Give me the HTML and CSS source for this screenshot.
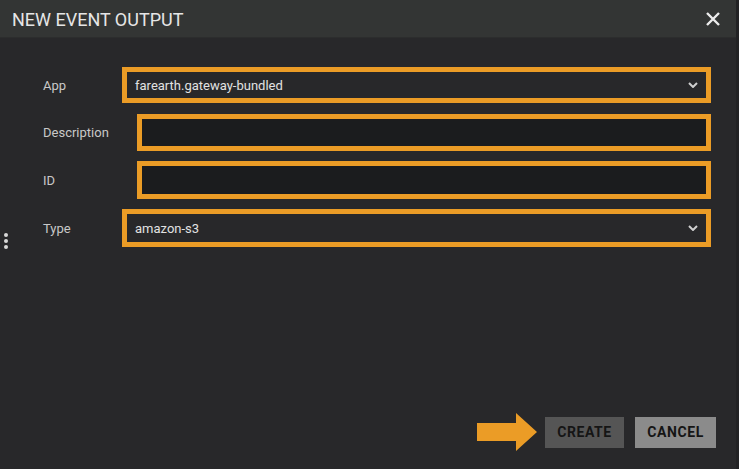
FILE: index.html
```html
<!DOCTYPE html>
<html>
<head>
<meta charset="utf-8">
<link rel="stylesheet" href="styles.css">
</head>
<body>
<div class="dialog">
  <div class="header">
    <span class="title">NEW EVENT OUTPUT</span>
    <svg class="close" width="16" height="16" viewBox="0 0 16 16"><path d="M2 2 L14 14 M14 2 L2 14" stroke="#ececec" stroke-width="2.4" fill="none"/></svg>
  </div>
  <div class="body">
    <div class="dots"><span></span><span></span><span></span></div>
    <div class="form">
      <div class="row row-sm">
        <div class="label lbl-select">App</div>
        <div class="field select"><span class="value">farearth.gateway-bundled</span>
          <svg class="chev" width="10" height="6" viewBox="0 0 10 6"><path d="M1 1 L5 5 L9 1" stroke="#cfcfcf" stroke-width="2" fill="none"/></svg>
        </div>
      </div>
      <div class="row">
        <div class="label lbl-input">Description</div>
        <div class="field input"></div>
      </div>
      <div class="row row-lg">
        <div class="label lbl-input">ID</div>
        <div class="field input"></div>
      </div>
      <div class="row row-lg">
        <div class="label lbl-select">Type</div>
        <div class="field select"><span class="value">amazon-s3</span>
          <svg class="chev" width="10" height="6" viewBox="0 0 10 6"><path d="M1 1 L5 5 L9 1" stroke="#cfcfcf" stroke-width="2" fill="none"/></svg>
        </div>
      </div>
    </div>
    <div class="footer">
      <svg class="arrow" width="60" height="38" viewBox="0 0 60 38"><path d="M0 10 H39 V0 L60 19 L39 38 V28 H0 Z" fill="#eb9c26"/></svg>
      <button class="btn create">CREATE</button>
      <button class="btn cancel">CANCEL</button>
    </div>
  </div>
</div>
</body>
</html>
```
FILE: styles.css
```css
html, body {
  margin: 0;
  padding: 0;
  background: #222224;
}
body {
  width: 739px;
  height: 469px;
  overflow: hidden;
  font-family: Roboto, "Liberation Sans", sans-serif;
}
.dialog {
  width: 736px;
  height: 469px;
  background: #28282a;
  display: flex;
  flex-direction: column;
}
.header {
  height: 38px;
  flex: none;
  background: #333534;
  border-bottom: 1px solid #2c2d2d;
  box-sizing: border-box;
  display: flex;
  align-items: center;
  justify-content: space-between;
  padding: 0 15px 0 12px;
}
.title {
  color: #e6e6e6;
  font-size: 18px;
  white-space: nowrap;
  margin-top: 1px;
}
.close {
  margin-top: 1px;
}
.body {
  position: relative;
  flex: 1;
  display: flex;
  flex-direction: column;
  justify-content: space-between;
}
.dots {
  position: absolute;
  left: 4px;
  top: 195px;
  display: flex;
  flex-direction: column;
  gap: 2px;
}
.dots span {
  width: 4px;
  height: 4px;
  border-radius: 50%;
  background: #d8d8d8;
}
.form {
  padding: 29px 25px 0 43px;
  display: flex;
  flex-direction: column;
  gap: 10px;
}
.row {
  display: flex;
  align-items: center;
  height: 37px;
}
.row-sm {
  height: 36px;
  margin-bottom: 1px;
}
.row-lg {
  height: 38px;
}
.label {
  color: #c8c8c8;
  font-size: 13px;
  flex: none;
}
.lbl-select { width: 79px; }
.lbl-input { width: 94px; }
.field {
  flex: 1;
  height: 100%;
  box-sizing: border-box;
  border: 5px solid #eb9c26;
  display: flex;
  align-items: center;
}
.select {
  background: #28282a;
  padding: 0 8px 0 8px;
  justify-content: space-between;
}
.input {
  background: #1b1c1e;
}
.value {
  color: #e2e2e2;
  font-size: 13px;
}
.footer {
  display: flex;
  align-items: center;
  justify-content: flex-end;
  padding: 0 20px 18px 0;
}
.arrow {
  margin-right: 8px;
}
.btn {
  height: 31px;
  border: none;
  font-family: Roboto, "Liberation Sans", sans-serif;
  font-weight: 700;
  font-size: 14px;
  letter-spacing: 0.6px;
  color: #151515;
  padding: 0;
}
.create {
  width: 79px;
  background: #555555;
  margin-right: 11px;
}
.cancel {
  width: 81px;
  background: #8b8b8b;
}
```
